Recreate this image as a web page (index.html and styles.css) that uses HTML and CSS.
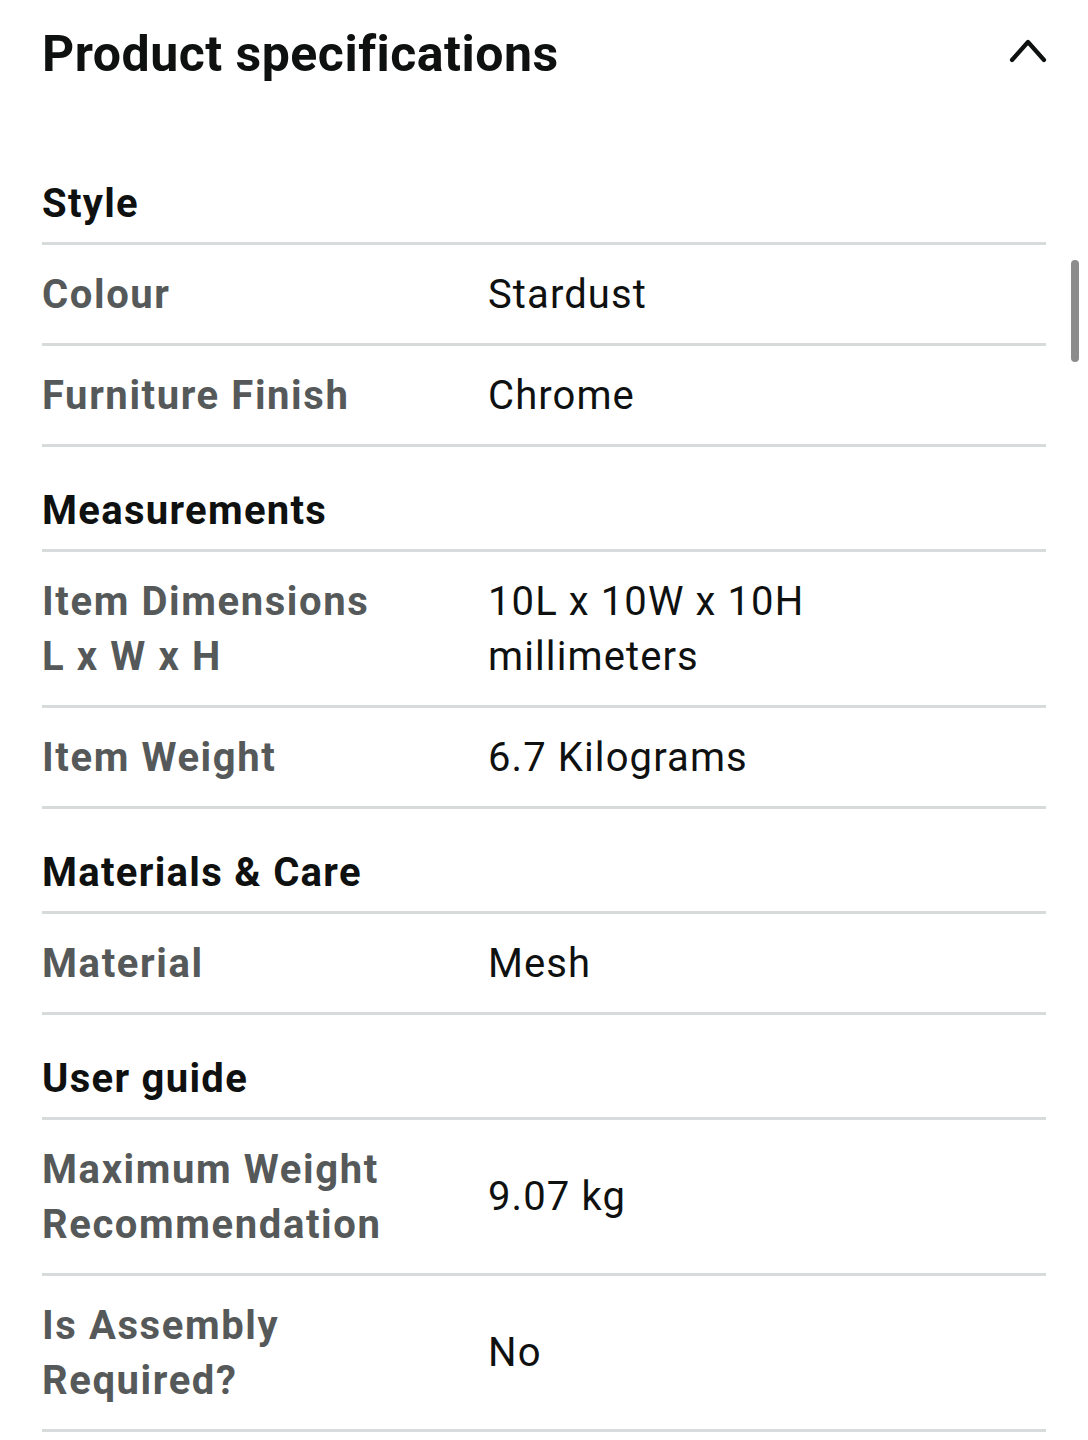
FILE: index.html
```html
<!DOCTYPE html>
<html lang="en">
<head>
<meta charset="utf-8">
<title>Product specifications</title>
<link rel="stylesheet" href="styles.css">
</head>
<body>
<div class="page">
  <header class="head">
    <h1 class="title">Product specifications</h1>
    <svg class="chev" width="40" height="30" viewBox="0 0 40 30"><path d="M4 24 L20 6 L36 24" fill="none" stroke="#0f1111" stroke-width="4.2" stroke-linecap="round" stroke-linejoin="round"/></svg>
  </header>

  <section class="group">
    <h2 class="ghead">Style</h2>
    <div class="row"><div class="lab">Colour</div><div class="val">Stardust</div></div>
    <div class="row"><div class="lab">Furniture Finish</div><div class="val">Chrome</div></div>
  </section>

  <section class="group">
    <h2 class="ghead">Measurements</h2>
    <div class="row"><div class="lab">Item Dimensions<br>L x W x H</div><div class="val">10L x 10W x 10H<br>millimeters</div></div>
    <div class="row"><div class="lab">Item Weight</div><div class="val">6.7 Kilograms</div></div>
  </section>

  <section class="group">
    <h2 class="ghead">Materials &amp; Care</h2>
    <div class="row"><div class="lab">Material</div><div class="val">Mesh</div></div>
  </section>

  <section class="group">
    <h2 class="ghead">User guide</h2>
    <div class="row"><div class="lab">Maximum Weight<br>Recommendation</div><div class="val">9.07 kg</div></div>
    <div class="row"><div class="lab">Is Assembly<br>Required?</div><div class="val">No</div></div>
  </section>
</div>
<div class="scrollbar"></div>
</body>
</html>
```
FILE: styles.css
```css
html, body {
  margin: 0;
  padding: 0;
  background: #ffffff;
}
body {
  font-family: Roboto, "Liberation Sans", sans-serif;
  color: #0f1111;
}
.page {
  padding: 0 42px;
}
.head {
  display: flex;
  justify-content: space-between;
  align-items: center;
  height: 108px;
}
.title {
  margin: 0;
  font-size: 50px;
  font-weight: 700;
  line-height: 60px;
  letter-spacing: 0.5px;
}
.chev {
  display: block;
  margin-right: -2px;
  margin-top: -6px;
}
.group {
  display: flex;
  flex-direction: column;
}
.ghead {
  margin: 0;
  font-size: 40px;
  font-weight: 700;
  line-height: 55px;
  padding: 68px 0 11px;
  border-bottom: 3px solid #d8dbdb;
  letter-spacing: 1.3px;
}
.group + .group .ghead {
  padding-top: 36px;
}
.row {
  display: grid;
  grid-template-columns: 446px 1fr;
  align-items: center;
  padding: 21.5px 0;
  border-bottom: 3px solid #d8dbdb;
  font-size: 40px;
  line-height: 55px;
}
.lab {
  font-weight: 700;
  color: #565959;
  letter-spacing: 1.6px;
}
.val {
  font-weight: 400;
  color: #0f1111;
  letter-spacing: 1.1px;
}
.scrollbar {
  position: absolute;
  left: 1071px;
  top: 260px;
  width: 8px;
  height: 102px;
  border-radius: 4px;
  background: #8c8c8c;
}
```
